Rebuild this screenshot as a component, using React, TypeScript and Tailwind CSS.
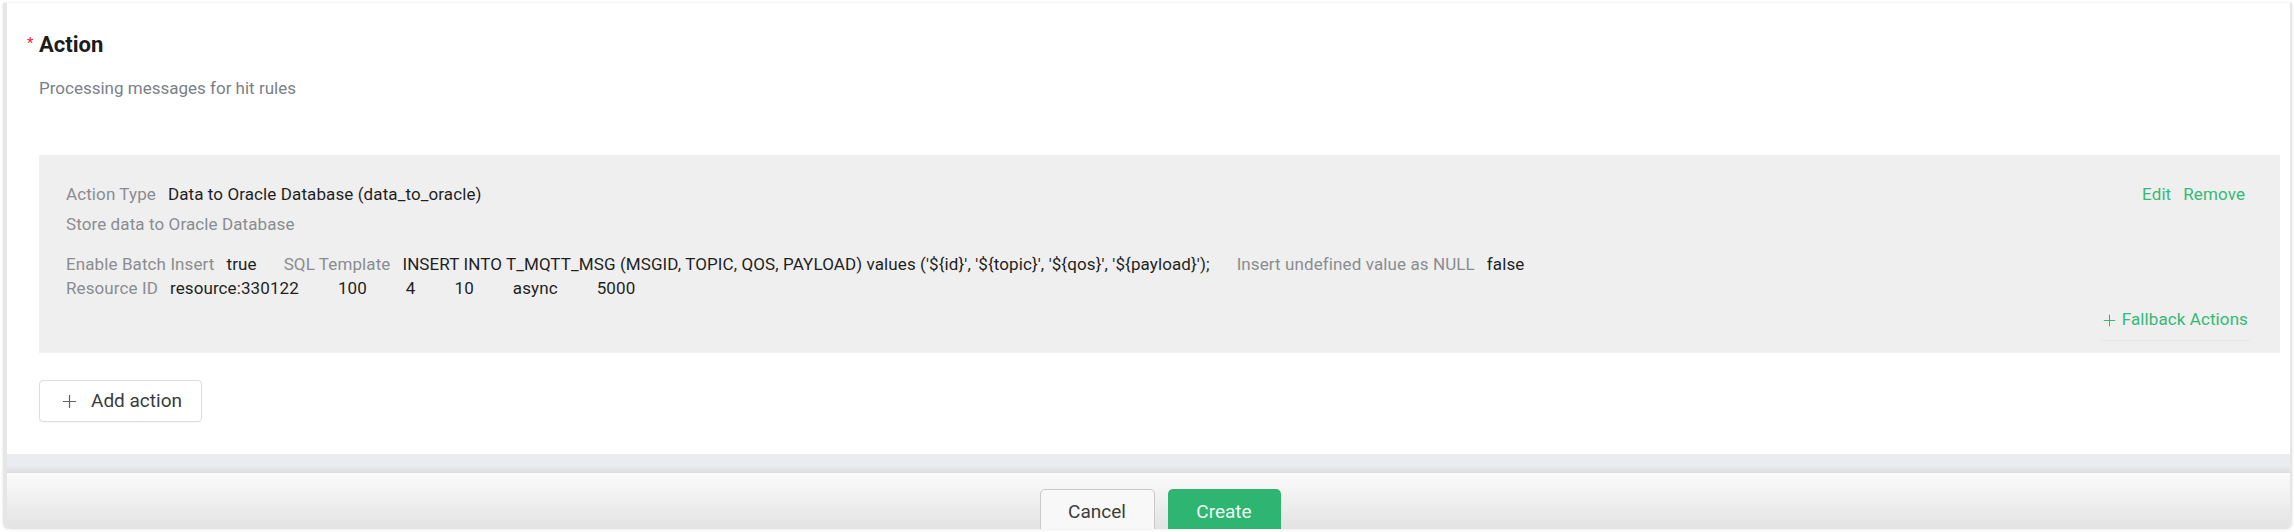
import React from 'react';

const SQL =
  "INSERT INTO T_MQTT_MSG (MSGID, TOPIC, QOS, PAYLOAD) values ('${id}', '${topic}', '${qos}', '${payload}');";

interface FieldProps {
  label?: string;
  value: string;
}

function Field({ label = '', value }: FieldProps) {
  return (
    <div className="flex whitespace-nowrap">
      <span className="mr-[12px] text-[#8a8c91]">{label}</span>
      <span className="text-[#1f1f1f]">{value}</span>
    </div>
  );
}

function PlusIcon({ className }: { className?: string }) {
  return (
    <svg className={className} viewBox="0 0 16 16" fill="none" stroke="currentColor" strokeWidth={1.3}>
      <path d="M8 1v14M1 8h14" />
    </svg>
  );
}

export default function App() {
  return (
    <div className="w-[2294px] h-[532px] bg-white pt-[3px] pl-[3px] font-[Roboto,'Noto_Sans',sans-serif] overflow-hidden">
      <div className="w-[2289px] h-[526px] flex flex-col border-l-[4px] border-r-[2px] border-[#e6e6e6] rounded-b-[6px] shadow-[0_0_3px_rgba(0,0,0,0.12)] bg-[#ebecf0]">
        {/* Card */}
        <div className="h-[451px] bg-white pt-[27px] pl-[32px] pr-[10px]">
          <div className="flex items-start leading-[30px]">
            <span className="-ml-[12px] w-[12px] text-[15px] leading-[26px] text-[#f5222d]">*</span>
            <h2 className="text-[22px] font-bold text-[#1c1c1c]">Action</h2>
          </div>
          <p className="mt-[16px] text-[17px] leading-[24px] text-[#7b7f88]">Processing messages for hit rules</p>

          {/* Action item */}
          <div className="mt-[55px] bg-[#efefef] pl-[27px] pr-[28px] pt-[24px] pb-[13px] text-[17px] tracking-[0.1px]">
            <div className="flex justify-between leading-[30px]">
              <Field label="Action Type" value="Data to Oracle Database (data_to_oracle)" />
              <div className="flex gap-[12px] mr-[7px] text-[#35b978]">
                <button>Edit</button>
                <button>Remove</button>
              </div>
            </div>
            <div className="leading-[30px] text-[#8a8c91]">Store data to Oracle Database</div>
            <div className="mt-[13px] flex gap-[27px] leading-[24px]">
              <Field label="Enable Batch Insert" value="true" />
              <Field label="SQL Template" value={SQL} />
              <Field label="Insert undefined value as NULL" value="false" />
            </div>
            <div className="flex gap-[27px] leading-[24px]">
              <Field label="Resource ID" value="resource:330122" />
              <Field value="100" />
              <Field value="4" />
              <Field value="10" />
              <Field value="async" />
              <Field value="5000" />
            </div>
            <div className="flex justify-end">
              <button className="h-[40px] px-[4px] flex items-center gap-[6px] rounded-[6px] text-[#35b978] shadow-[0_2px_2px_-1px_rgba(0,0,0,0.05)]">
                <PlusIcon className="w-[13px] h-[13px]" />
                Fallback Actions
              </button>
            </div>
          </div>

          <button className="mt-[27px] h-[42px] w-[163px] flex items-center pl-[22px] gap-[14px] border border-[#dcdde0] rounded-[4px] bg-white text-[19px] text-[#3a3b3e] shadow-[0_1px_2px_rgba(0,0,0,0.04)]">
            <PlusIcon className="w-[15px] h-[15px] text-[#606266]" />
            Add action
          </button>
        </div>

        {/* Gap strip */}
        <div className="h-[19px] bg-linear-to-b from-[#ebecf0] from-60% to-[#dddddf]" />

        {/* Footer */}
        <div className="h-[56px] overflow-hidden rounded-b-[5px] bg-linear-to-b from-[#fbfbfb] to-[#e3e3e3] pt-[16px] pl-[23px] flex justify-center gap-[13px]">
          <button className="h-[46px] w-[115px] rounded-[5px] border border-[#c9c9c9] bg-[#f8f8f8] text-[19px] text-[#3c3c3c]">
            Cancel
          </button>
          <button className="h-[46px] w-[113px] rounded-[5px] bg-[#2eb572] text-[19px] text-[#effaf3]">
            Create
          </button>
        </div>
      </div>
    </div>
  );
}
